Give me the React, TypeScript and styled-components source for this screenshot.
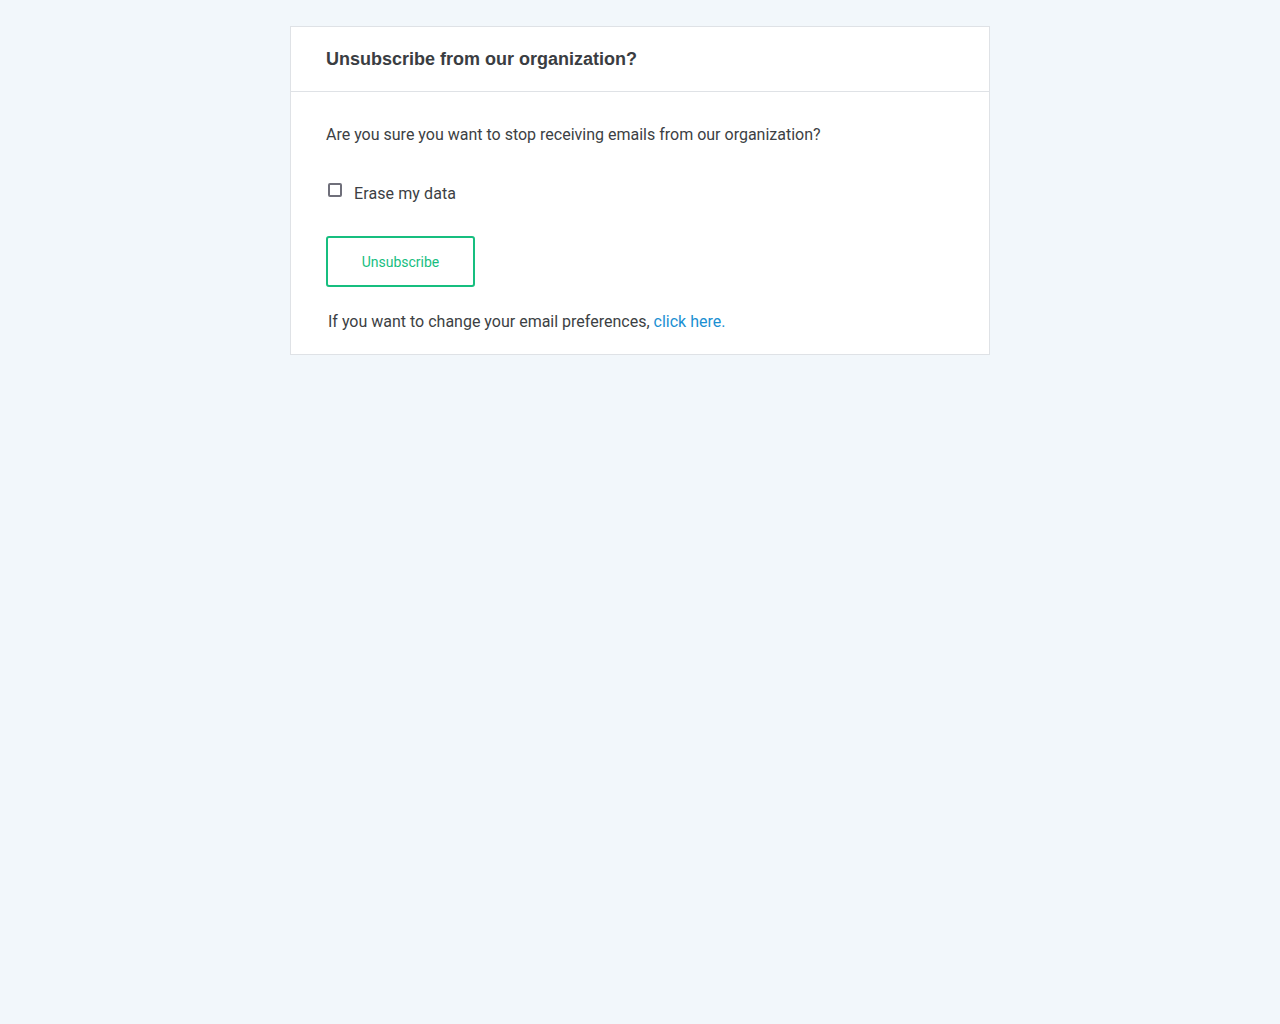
import React from "react";
import styled, { createGlobalStyle } from "styled-components";

const Global = createGlobalStyle`
  html, body { margin: 0; padding: 0; background: #f2f7fb; }
  body { font-family: Roboto, "Liberation Sans", Arial, sans-serif; color: #3c3f44; }
`;

const Page = styled.div`
  display: flex;
  justify-content: center;
  align-items: flex-start;
  padding-top: 26px;
  min-height: 1024px;
  box-sizing: border-box;
`;

const Card = styled.div`
  width: 700px;
  box-sizing: border-box;
  background: #fff;
  border: 1px solid #dfe2e6;
`;

const Header = styled.div`
  height: 65px;
  box-sizing: border-box;
  padding: 0 35px;
  display: flex;
  align-items: center;
  border-bottom: 1px solid #dfe2e6;
`;

const Title = styled.h1`
  margin: 0;
  font-family: "Liberation Sans", Arial, sans-serif;
  font-size: 18px;
  font-weight: 700;
  color: #3a3d42;
`;

const Body = styled.div`
  padding: 33px 35px 22px;
  display: flex;
  flex-direction: column;
  align-items: flex-start;
`;

const Text = styled.p`
  margin: 0;
  font-size: 16px;
  line-height: 20px;
  color: #3c3f44;
`;

const CheckRow = styled.label`
  display: flex;
  align-items: center;
  gap: 12px;
  margin-top: 39px;
  margin-left: 2px;
  font-size: 16px;
  line-height: 20px;
  letter-spacing: 0.1px;
  color: #3c3f44;
`;

const Box = styled.span`
  width: 14px;
  height: 14px;
  box-sizing: border-box;
  border: 2px solid #6f6f7a;
  border-radius: 2px;
  margin-top: -8px;
`;

const Button = styled.button`
  margin-top: 32px;
  width: 149px;
  height: 51px;
  background: #fff;
  border: 2px solid #17be7f;
  border-radius: 3px;
  color: #17be7f;
  font-family: Roboto, "Liberation Sans", Arial, sans-serif;
  font-size: 14px;
  cursor: pointer;
`;

const Footer = styled(Text)`
  margin-top: 25px;
  margin-left: 2px;
`;

const Link = styled.a`
  color: #1b8fd2;
  text-decoration: none;
  margin-left: 4px;
`;

export default function App() {
  return (
    <>
      <Global />
      <Page>
        <Card>
          <Header>
            <Title>Unsubscribe from our organization?</Title>
          </Header>
          <Body>
            <Text>Are you sure you want to stop receiving emails from our organization?</Text>
            <CheckRow>
              <Box />
              Erase my data
            </CheckRow>
            <Button>Unsubscribe</Button>
            <Footer>
              If you want to change your email preferences,
              <Link href="#">click here.</Link>
            </Footer>
          </Body>
        </Card>
      </Page>
    </>
  );
}
